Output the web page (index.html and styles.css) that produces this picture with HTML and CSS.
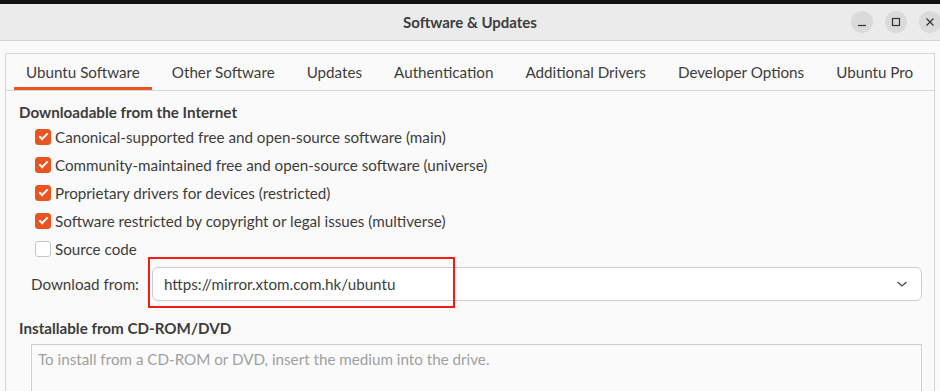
FILE: index.html
```html
<!DOCTYPE html>
<html>
  <head>
    <meta http-equiv="Content-Type" content="text/html;charset=utf-8" />
    <title>Software &amp; Updates</title>
    <link rel="stylesheet" href="styles.css">
  </head>
  <body>
    <div class="window">
      <div class="headerbar">
        <div class="title">Software &amp; Updates</div>
        <div class="controls">
          <span class="ctl">
            <svg width="10" height="10" viewBox="0 0 10 10"><path d="M1 8.5h8" stroke="#333" stroke-width="1.2"/></svg>
          </span>
          <span class="ctl">
            <svg width="10" height="10" viewBox="0 0 10 10"><rect x="1.5" y="1.5" width="7" height="7" fill="none" stroke="#333" stroke-width="1.2"/></svg>
          </span>
          <span class="ctl">
            <svg width="10" height="10" viewBox="0 0 10 10"><path d="M1.5 1.5l7 7M8.5 1.5l-7 7" stroke="#333" stroke-width="1.2"/></svg>
          </span>
        </div>
      </div>

      <div class="content">
        <div class="notebook">
          <div class="tabs">
            <div class="tab active">Ubuntu Software</div>
            <div class="tab">Other Software</div>
            <div class="tab">Updates</div>
            <div class="tab">Authentication</div>
            <div class="tab">Additional Drivers</div>
            <div class="tab">Developer Options</div>
            <div class="tab">Ubuntu Pro</div>
          </div>

          <div class="page">
            <div class="heading">Downloadable from the Internet</div>
            <div class="checks">
              <label class="check"><span class="box on"></span>Canonical-supported free and open-source software (main)</label>
              <label class="check"><span class="box on"></span>Community-maintained free and open-source software (universe)</label>
              <label class="check"><span class="box on"></span>Proprietary drivers for devices (restricted)</label>
              <label class="check"><span class="box on"></span>Software restricted by copyright or legal issues (multiverse)</label>
              <label class="check"><span class="box"></span>Source code</label>
            </div>

            <div class="download">
              <span class="dl-label">Download from:</span>
              <div class="combo">
                <span>https://mirror.xtom.com.hk/ubuntu</span>
                <svg width="12" height="8" viewBox="0 0 12 8"><path d="M1.5 2l4.5 4 4.5-4" fill="none" stroke="#444" stroke-width="1.2"/></svg>
                <div class="highlight"></div>
              </div>
            </div>

            <div class="heading second">Installable from CD-ROM/DVD</div>
            <div class="cdrom">To install from a CD-ROM or DVD, insert the medium into the drive.</div>
          </div>
        </div>
      </div>
    </div>
  </body>
</html>
```

FILE: styles.css
```css
html, body {
  margin: 0;
  height: 100%;
}

body {
  font-family: "Lato", "Noto Sans", sans-serif;
  font-size: 15.2px;
  color: #3d3d3d;
  background-color: #fafafa;
  overflow: hidden;
}

.window {
  border-top: 4px solid #121212;
  height: 100%;
  box-sizing: border-box;
}

.headerbar {
  height: 36px;
  background-color: #ebebeb;
  border-bottom: 1px solid #d2d2d2;
  position: relative;
  display: flex;
  align-items: center;
  justify-content: center;
}

.title {
  font-weight: bold;
  font-size: 15px;
  color: #3d3d3d;
}

.controls {
  position: absolute;
  right: 0;
  top: 7px;
  display: flex;
  gap: 12px;
  margin-right: -1px;
}

.ctl {
  width: 22px;
  height: 22px;
  border-radius: 50%;
  background-color: #dadada;
  display: flex;
  align-items: center;
  justify-content: center;
}

.content {
  padding: 12px 5px 0 5px;
}

.notebook {
  border: 1px solid #d6d6d6;
  border-bottom: none;
  background-color: #fafafa;
  height: 337px;
  overflow: hidden;
}

.tabs {
  display: flex;
  height: 36px;
  border-bottom: 1px solid #d6d6d6;
  padding-left: 8px;
  gap: 8px;
}

.tab {
  padding: 2px 12px 0 12px;
  display: flex;
  align-items: center;
  color: #3d3d3d;
  box-sizing: border-box;
  border-bottom: 3px solid transparent;
}

.tab.active {
  border-bottom-color: #e95420;
}

.page {
  padding: 11px 12px 0 13px;
}

.heading {
  font-weight: bold;
  line-height: 20px;
}

.heading.second {
  margin-top: 17px;
}

.checks {
  display: flex;
  flex-direction: column;
  padding-left: 16px;
  margin-top: 1px;
}

.check {
  height: 28px;
  display: flex;
  align-items: center;
  gap: 4px;
}

.box {
  width: 14px;
  height: 14px;
  border: 1px solid #c4c4c4;
  border-radius: 3px;
  background-color: #ffffff;
  position: relative;
}

.box.on {
  background-color: #e95420;
  border-color: #e95420;
}

.box.on::after {
  content: "";
  position: absolute;
  left: 3px;
  top: 3px;
  width: 7px;
  height: 3px;
  border-left: 2px solid #fff;
  border-bottom: 2px solid #fff;
  transform: rotate(-45deg);
}

.download {
  display: flex;
  align-items: center;
  margin-top: 4px;
  padding-left: 12px;
}

.dl-label {
  width: 121px;
}

.combo {
  flex: 1;
  height: 32px;
  border: 1px solid #cdcdcd;
  border-radius: 6px;
  background-color: #ffffff;
  display: flex;
  align-items: center;
  justify-content: space-between;
  padding: 0 13px 0 11px;
  position: relative;
}

.highlight {
  position: absolute;
  left: -5px;
  top: -11px;
  width: 303px;
  height: 47px;
  border: 2px solid #f21c16;
}

.cdrom {
  margin: 6px 0 0 12px;
  height: 60px;
  border: 1px solid #cfcfcf;
  background-color: #fafafa;
  color: #a0a0a0;
  padding: 5px 6px;
}
```
